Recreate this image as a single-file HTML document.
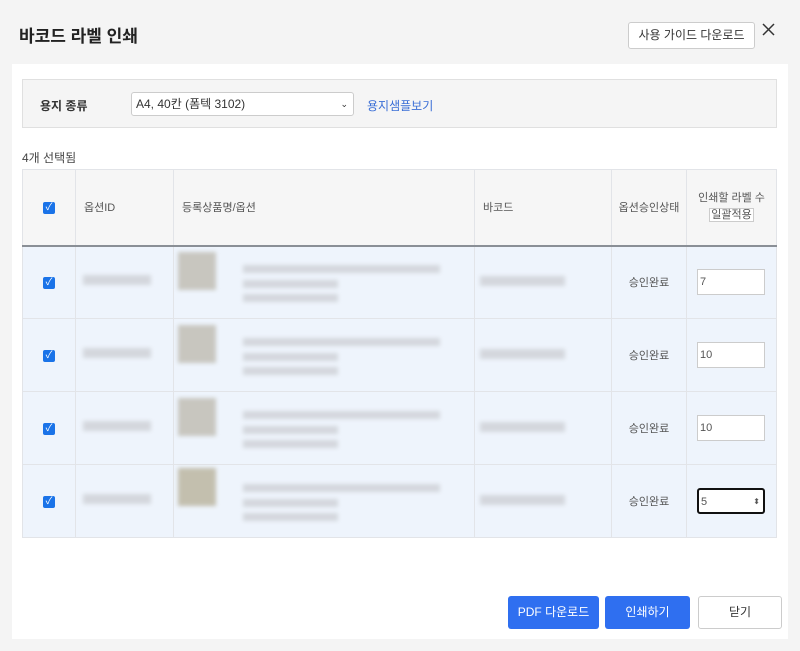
<!DOCTYPE html>
<html><head><meta charset="utf-8"><style>
*{box-sizing:border-box;margin:0;padding:0}
body{width:800px;height:651px;background:#f4f4f4;font-family:"Liberation Sans","Noto Sans CJK KR",sans-serif;font-size:12px;color:#333;position:relative;overflow:hidden}
.abs{position:absolute}
h1{position:absolute;left:19px;top:22px;font-size:17px;font-weight:bold;color:#222}
.guide{left:628px;top:22px;width:127px;height:27px;border:1px solid #ccc;border-radius:3px;background:#fff;font-size:12px;text-align:center;line-height:25px;color:#333}
.panel{left:12px;top:64px;width:776px;height:575px;background:#fff}
.filter{left:22px;top:79px;width:755px;height:49px;background:#f5f5f5;border:1px solid #e0e0e0}
.sel{left:131px;top:92px;width:223px;height:24px;border:1px solid #ccc;border-radius:3px;background:#fff;font-size:12px;padding-left:4px;line-height:22px}
.blur{position:absolute;background:#c9cbd0;filter:blur(2px);opacity:.7}
table{position:absolute;left:22px;top:169px;width:755px;border-collapse:collapse;font-size:11px;color:#555;border:1px solid #e2e4e8}
td,th{border-right:1px solid #e2e4e8;border-bottom:1px solid #e2e4e8;font-weight:normal;position:relative}
th{background:#f6f6f6;height:76px;text-align:left;padding-left:8px;border-bottom:2px solid #8a8f96}
td{background:#eef4fc;height:73px}
.cb{width:12px;height:12px;background:#1a73e8;border-radius:2px;display:inline-block;color:#fff;font-size:10px;line-height:12px;text-align:center}
.inp{width:68px;height:26px;background:#fff;border:1px solid #ccc;margin-left:10px;font-size:11px;line-height:24px;padding-left:2px}
.btn{position:absolute;top:596px;height:33px;border-radius:3px;font-size:12px;text-align:center;line-height:33px}
</style></head><body>
<h1>바코드 라벨 인쇄</h1>
<div class="abs guide">사용 가이드 다운로드</div>
<svg class="abs" style="left:762px;top:23px" width="13" height="13" viewBox="0 0 13 13"><path d="M1 1L12 12M12 1L1 12" stroke="#333" stroke-width="1.5"/></svg>
<div class="abs panel"></div>
<div class="abs filter"></div>
<div class="abs" style="left:40px;top:97px;font-size:12px;font-weight:bold;color:#333">용지 종류</div>
<div class="abs sel">A4, 40칸 (폼텍 3102)<span style="position:absolute;right:5px;top:0;font-size:9px">⌄</span></div>
<div class="abs" style="left:367px;top:97px;font-size:12px;color:#3b6fd6">용지샘플보기</div>
<div class="abs" style="left:22px;top:149px;font-size:12px;color:#444">4개 선택됨</div>
<table>
<tr><th style="width:53px;text-align:center;padding:0"><span class="cb">✓</span></th><th style="width:98px">옵션ID</th><th style="width:301px">등록상품명/옵션</th><th style="width:137px">바코드</th><th style="width:75px;text-align:center;padding:0">옵션승인상태</th><th style="text-align:center;padding:0;line-height:17px">인쇄할 라벨 수<br><span style="border:1px solid #ccc;background:#fff;padding:0 1px">일괄적용</span></th></tr>
<tr><td style="text-align:center"><span class="cb">✓</span></td><td></td><td></td><td></td><td style="text-align:center">승인완료</td><td><div class="inp">7</div></td></tr>
<tr><td style="text-align:center"><span class="cb">✓</span></td><td></td><td></td><td></td><td style="text-align:center">승인완료</td><td><div class="inp">10</div></td></tr>
<tr><td style="text-align:center"><span class="cb">✓</span></td><td></td><td></td><td></td><td style="text-align:center">승인완료</td><td><div class="inp">10</div></td></tr>
<tr><td style="text-align:center"><span class="cb">✓</span></td><td></td><td></td><td></td><td style="text-align:center">승인완료</td><td><div class="inp" style="border:2px solid #111;border-radius:3px">5<span style="float:right;margin-right:3px;font-size:8px">⬍</span></div></td></tr>
</table>
<div class="blur" style="left:83px;top:275px;width:68px;height:10px"></div>
<div class="blur" style="left:178px;top:252px;width:38px;height:38px;background:#b8b3a6"></div>
<div class="blur" style="left:243px;top:265px;width:197px;height:8px"></div>
<div class="blur" style="left:243px;top:280px;width:95px;height:8px"></div>
<div class="blur" style="left:243px;top:294px;width:95px;height:8px"></div>
<div class="blur" style="left:480px;top:276px;width:85px;height:10px"></div>
<div class="blur" style="left:83px;top:348px;width:68px;height:10px"></div>
<div class="blur" style="left:178px;top:325px;width:38px;height:38px;background:#b8b3a6"></div>
<div class="blur" style="left:243px;top:338px;width:197px;height:8px"></div>
<div class="blur" style="left:243px;top:353px;width:95px;height:8px"></div>
<div class="blur" style="left:243px;top:367px;width:95px;height:8px"></div>
<div class="blur" style="left:480px;top:349px;width:85px;height:10px"></div>
<div class="blur" style="left:83px;top:421px;width:68px;height:10px"></div>
<div class="blur" style="left:178px;top:398px;width:38px;height:38px;background:#b8b3a6"></div>
<div class="blur" style="left:243px;top:411px;width:197px;height:8px"></div>
<div class="blur" style="left:243px;top:426px;width:95px;height:8px"></div>
<div class="blur" style="left:243px;top:440px;width:95px;height:8px"></div>
<div class="blur" style="left:480px;top:422px;width:85px;height:10px"></div>
<div class="blur" style="left:83px;top:494px;width:68px;height:10px"></div>
<div class="blur" style="left:178px;top:468px;width:38px;height:38px;background:#b1a98e"></div>
<div class="blur" style="left:243px;top:484px;width:197px;height:8px"></div>
<div class="blur" style="left:243px;top:499px;width:95px;height:8px"></div>
<div class="blur" style="left:243px;top:513px;width:95px;height:8px"></div>
<div class="blur" style="left:480px;top:495px;width:85px;height:10px"></div>
<div class="btn" style="left:508px;width:91px;background:#2f6ff0;color:#fff">PDF 다운로드</div>
<div class="btn" style="left:605px;width:85px;background:#2f6ff0;color:#fff">인쇄하기</div>
<div class="btn" style="left:698px;width:84px;background:#fff;border:1px solid #ccc;color:#333;line-height:31px">닫기</div>
</body></html>
